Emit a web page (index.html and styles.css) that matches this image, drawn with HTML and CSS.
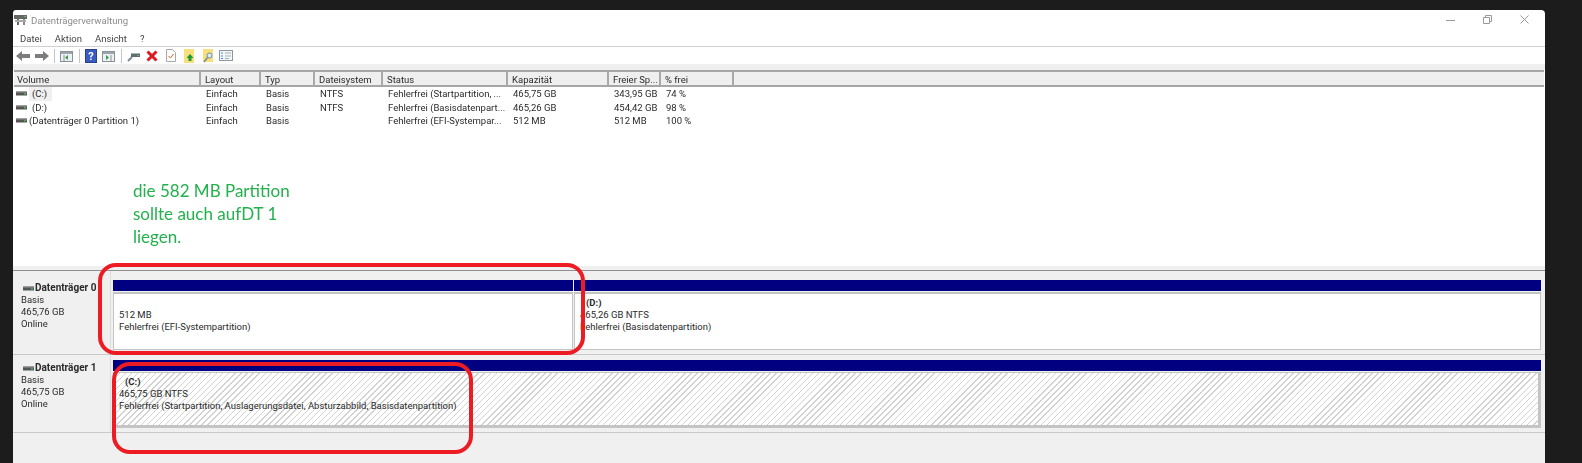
FILE: index.html
```html
<!DOCTYPE html>
<html lang="de">
<head>
    <meta charset="UTF-8">
    <title>Datenträgerverwaltung</title>
    <link rel="stylesheet" href="styles.css">
</head>
<body>
    <svg width="0" height="0" class="defs">
        <symbol id="disk" viewBox="0 0 11 5">
            <rect x="0" y="0.5" width="11" height="4" fill="#555"/>
            <rect x="0" y="0.5" width="11" height="1" fill="#999"/>
            <rect x="8" y="2" width="2" height="1.5" fill="#4caf50"/>
        </symbol>
    </svg>
    <div class="window">
        <div class="titlebar">
            <svg class="app-icon" width="14" height="12" viewBox="0 0 14 12">
                <rect x="0" y="1" width="13" height="4" fill="#666"/>
                <rect x="3" y="5" width="2" height="6" fill="#666"/>
                <rect x="9" y="5" width="2" height="6" fill="#888"/>
                <rect x="1" y="6" width="11" height="2" fill="#aaa"/>
                <rect x="10" y="2" width="2" height="1" fill="#6b6"/>
            </svg>
            <span class="title">Datenträgerverwaltung</span>
            <div class="win-buttons">
                <svg width="10" height="10" viewBox="0 0 10 10"><path d="M0 5.5h9" stroke="#999" fill="none"/></svg>
                <svg width="10" height="10" viewBox="0 0 10 10"><path d="M.5 2.5h6v6h-6zM2.5 2.5v-2h6v6h-2" stroke="#999" fill="none"/></svg>
                <svg width="10" height="10" viewBox="0 0 10 10"><path d="M.5 .5l8 8M8.5 .5l-8 8" stroke="#999" fill="none"/></svg>
            </div>
        </div>
        <div class="menubar">
            <span>Datei</span>
            <span>Aktion</span>
            <span>Ansicht</span>
            <span>?</span>
        </div>
        <div class="toolbar">
            <svg class="tb" width="14" height="12" viewBox="0 0 14 12"><path d="M0 6l6-5v3h8v4H6v3z" fill="#7d7d7d"/></svg>
            <svg class="tb" width="14" height="12" viewBox="0 0 14 12"><path d="M14 6L8 1v3H0v4h8v3z" fill="#7d7d7d"/></svg>
            <i class="tb-sep"></i>
            <svg class="tb" width="14" height="12" viewBox="0 0 14 12"><rect x=".5" y="1.5" width="12" height="10" fill="#eef1f3" stroke="#8a9298"/><rect x="1" y="2" width="11" height="2" fill="#9aa5ad"/><path d="M8 5v5L5 7.5z" fill="#3c9a4a"/><path d="M4 5v6" stroke="#8a9298"/></svg>
            <i class="tb-sep"></i>
            <svg class="tb" width="12" height="14" viewBox="0 0 12 14"><rect x=".5" y=".5" width="11" height="13" fill="#3a5cc0" stroke="#27408f"/><text x="6" y="11" class="help-mark">?</text></svg>
            <svg class="tb" width="14" height="12" viewBox="0 0 14 12"><rect x=".5" y="1.5" width="12" height="10" fill="#eef1f3" stroke="#8a9298"/><rect x="1" y="2" width="11" height="2" fill="#9aa5ad"/><path d="M4 5v5l3-2.500z" fill="#3c9a4a"/><path d="M9 5v6" stroke="#8a9298"/></svg>
            <i class="tb-sep"></i>
            <svg class="tb" width="14" height="12" viewBox="0 0 14 12"><path d="M1 11l4-4" stroke="#7a8a94" stroke-width="2"/><rect x="4" y="3" width="9" height="4" fill="#5f6b73"/><rect x="4" y="3" width="9" height="1" fill="#a5b3bb"/><rect x="10" y="5" width="2" height="1" fill="#5b5"/></svg>
            <svg class="tb" width="12" height="12" viewBox="0 0 12 12"><path d="M1.500 1.500l9 9M10.500 1.500l-9 9" stroke="#dd1a1f" stroke-width="3"/></svg>
            <svg class="tb tb-far" width="10" height="13" viewBox="0 0 10 13"><path d="M.5 .5h6l3 3v9h-9z" fill="#fdfdfd" stroke="#a8a8a8"/><path d="M2.500 7l2 2 3-4" stroke="#d8692f" fill="none"/></svg>
            <svg class="tb tb-far" width="11" height="14" viewBox="0 0 11 14"><rect width="10" height="14" fill="#f7df7c"/><path d="M6 5l3.500 4H7.500v3h-3V9H2.500z" fill="#1f9a33"/></svg>
            <svg class="tb tb-far" width="11" height="14" viewBox="0 0 11 14"><rect width="10" height="13" fill="#f7df7c"/><circle cx="6.500" cy="6.500" r="2.500" fill="#dfeaf2" stroke="#6f8ca3"/><path d="M4.500 8.500L1 13" stroke="#6f8ca3" stroke-width="1.500"/></svg>
            <svg class="tb" width="14" height="11" viewBox="0 0 14 11"><rect x=".5" y=".5" width="13" height="10" fill="#f3f6f8" stroke="#8e989f"/><path d="M2 3h2M2 6h2M2 8.500h2" stroke="#4b8fc4"/><path d="M6 3h6M6 6h6M6 8.500h4" stroke="#a8b0b5"/></svg>
        </div>

        <div class="vol-band"></div>
        <div class="vol-grid vol-head">
            <span>Volume</span>
            <span>Layout</span>
            <span>Typ</span>
            <span>Dateisystem</span>
            <span>Status</span>
            <span>Kapazität</span>
            <span>Freier Sp...</span>
            <span>% frei</span>
            <span></span>
        </div>
        <div class="vol-list">
            <div class="vol-grid vol-row">
                <span class="vol-name"><svg class="disk-icon"><use href="#disk"/></svg><em class="sel">(C:)</em></span>
                <span>Einfach</span><span>Basis</span><span>NTFS</span>
                <span>Fehlerfrei (Startpartition, ...</span>
                <span>465,75 GB</span><span>343,95 GB</span><span>74 %</span><span></span>
            </div>
            <div class="vol-grid vol-row">
                <span class="vol-name"><svg class="disk-icon"><use href="#disk"/></svg><em>(D:)</em></span>
                <span>Einfach</span><span>Basis</span><span>NTFS</span>
                <span>Fehlerfrei (Basisdatenpart...</span>
                <span>465,26 GB</span><span>454,42 GB</span><span>98 %</span><span></span>
            </div>
            <div class="vol-grid vol-row">
                <span class="vol-name"><svg class="disk-icon"><use href="#disk"/></svg><b class="vol-plain">(Datenträger 0 Partition 1)</b></span>
                <span>Einfach</span><span>Basis</span><span></span>
                <span>Fehlerfrei (EFI-Systempar...</span>
                <span>512 MB</span><span>512 MB</span><span>100 %</span><span></span>
            </div>
        </div>
        <div class="splitter"></div>

        <div class="disks">
            <div class="disk disk-0">
                <div class="disk-info">
                    <div class="disk-name"><svg class="disk-icon"><use href="#disk"/></svg>Datenträger 0</div>
                    <div>Basis</div>
                    <div>465,76 GB</div>
                    <div>Online</div>
                </div>
                <div class="parts">
                    <div class="part part-efi">
                        <div class="part-bar"></div>
                        <div class="part-body">
                            <div>&nbsp;</div>
                            <div>512 MB</div>
                            <div>Fehlerfrei (EFI-Systempartition)</div>
                        </div>
                    </div>
                    <div class="part part-d">
                        <div class="part-bar"></div>
                        <div class="part-body">
                            <div class="part-label">(D:)</div>
                            <div>465,26 GB NTFS</div>
                            <div>Fehlerfrei (Basisdatenpartition)</div>
                        </div>
                    </div>
                </div>
            </div>
            <div class="disk disk-1">
                <div class="disk-info">
                    <div class="disk-name"><svg class="disk-icon"><use href="#disk"/></svg>Datenträger 1</div>
                    <div>Basis</div>
                    <div>465,75 GB</div>
                    <div>Online</div>
                </div>
                <div class="parts">
                    <div class="part part-c">
                        <div class="part-bar"></div>
                        <div class="part-body hatch">
                            <div class="part-label">(C:)</div>
                            <div>465,75 GB NTFS</div>
                            <div>Fehlerfrei (Startpartition, Auslagerungsdatei, Absturzabbild, Basisdatenpartition)</div>
                        </div>
                    </div>
                </div>
            </div>
        </div>
    </div>

    <p class="note">die 582 MB Partition<br>sollte auch aufDT 1<br>liegen.</p>
    <div class="mark mark-top"></div>
    <div class="mark mark-bottom"></div>
</body>
</html>
```

FILE: styles.css
```css
html, body {
    height: 100%;
}
body {
    margin: 0;
    background-color: #1c1c1c;
    overflow: hidden;
    font-family: 'Roboto', 'Noto Sans', sans-serif;
    font-size: 9.500px;
    color: #2a2a2a;
    position: relative;
}
.defs {
    position: absolute;
}
.window {
    margin: 10px 0 0 13px;
    width: 1532px;
    height: 453px;
    background-color: #fff;
    border-radius: 3px 4px 0 0;
    overflow: hidden;
    display: flex;
    flex-direction: column;
    filter: blur(0.4px);
}

/* title, menu, toolbar */
.titlebar {
    height: 20px;
    display: flex;
    align-items: center;
    padding-left: 1px;
    flex: none;
}
.app-icon {
    margin-right: 3px;
}
.title {
    color: #8c8c8c;
    font-size: 9.600px;
}
.win-buttons {
    margin-left: auto;
    display: flex;
    gap: 27px;
    padding-right: 15px;
}
.menubar {
    height: 16px;
    display: flex;
    align-items: center;
    gap: 13px;
    padding-left: 7px;
    border-bottom: 1px solid #d0d0d0;
    color: #444;
    flex: none;
}
.toolbar {
    height: 17px;
    display: flex;
    align-items: center;
    padding-left: 3px;
    gap: 5px;
    flex: none;
}
.tb {
    flex: none;
    display: block;
}
.tb-far {
    margin-left: 3px;
}
.tb-sep {
    width: 1px;
    height: 14px;
    background-color: #c4c4c4;
}
.help-mark {
    font-size: 11px;
    font-weight: bold;
    fill: #fff;
    text-anchor: middle;
}

/* volume list */
.vol-band {
    height: 6px;
    background-color: #efefef;
    flex: none;
}
.vol-grid {
    display: grid;
    grid-template-columns: 187px 60px 54px 68px 125px 101px 52px 73px 1fr;
}
.vol-head {
    height: 13px;
    margin-left: 1px;
    margin-right: 1px;
    background-color: #efefef;
    border-top: 2px solid #a6a6a6;
    border-bottom: 2px solid #a6a6a6;
    flex: none;
}
.vol-head span {
    border-right: 2px solid #a9a9a9;
    padding-left: 4px;
    line-height: 15px;
    white-space: nowrap;
    overflow: hidden;
}
.vol-head span:first-child {
    padding-left: 3px;
}
.vol-head span:last-child {
    border-right: none;
}
.vol-list {
    flex: 1;
    margin-left: 1px;
}
.vol-row {
    height: 13.600px;
    line-height: 13.600px;
    white-space: nowrap;
}
.vol-row span {
    padding-left: 5px;
    overflow: hidden;
}
.vol-row .vol-name {
    padding-left: 2px;
    display: flex;
    align-items: center;
}
.disk-icon {
    width: 11px;
    height: 5px;
    flex: none;
    margin-right: 1px;
}
.vol-name em {
    font-style: normal;
    margin-left: 1px;
    padding: 0 5px 0 3px;
}
.vol-name .sel {
    background-color: #f0f0f0;
}
.vol-plain {
    font-weight: normal;
    margin-left: 1px;
}
.splitter {
    height: 4px;
    background-color: #f0f0f0;
    border-bottom: 1px solid #8f8f8f;
    flex: none;
}

/* disk rows */
.disks {
    height: 192px;
    background-color: #f0f0f0;
    flex: none;
}
.disk {
    display: flex;
    border-bottom: 1px solid #c9c9c9;
}
.disk-0 {
    height: 83px;
}
.disk-1 {
    height: 77px;
}
.disk-info {
    width: 98px;
    padding: 11px 0 0 8px;
    box-sizing: border-box;
    border-right: 1px solid #dcdcdc;
    line-height: 12px;
    flex: none;
    white-space: nowrap;
    overflow: hidden;
}
.disk-1 .disk-info {
    padding-top: 7px;
}
.disk-name {
    font-weight: bold;
    font-size: 10px;
    display: flex;
    align-items: center;
    padding-left: 2px;
}
.parts {
    flex: 1;
    display: flex;
    padding: 9px 4px 0 2px;
    gap: 1px;
}
.disk-1 .parts {
    padding-top: 5px;
}
.part {
    display: flex;
    flex-direction: column;
}
.part-efi {
    width: 460px;
}
.part-d {
    flex: 1;
}
.part-c {
    flex: 1;
}
.part-bar {
    height: 11px;
    background-color: #000080;
    flex: none;
}
.part-body {
    height: 58px;
    box-sizing: border-box;
    margin-top: 1px;
    background-color: #fff;
    border: 1px solid #c4c4c4;
    border-top-width: 2px;
    padding: 3px 0 0 5px;
    line-height: 12px;
    white-space: nowrap;
}
.part-label {
    font-weight: bold;
    padding-left: 6px;
}
.hatch {
    border: 2px solid #c4c4c4;
    border-width: 1px 3px 3px 0;
    height: 56px;
    padding-left: 6px;
    background-color: #fff;
    background-image: repeating-linear-gradient(135deg, #d2d2d2 0, #d2d2d2 1px, #fff 1px, #fff 4.300px);
}

/* annotations drawn over the screenshot */
.note {
    position: absolute;
    left: 133px;
    top: 179px;
    margin: 0;
    font-family: 'Lato', sans-serif;
    font-size: 17px;
    line-height: 23px;
    color: #22b14c;
}
.mark {
    position: absolute;
    box-sizing: border-box;
    border: 4px solid #ed1c24;
    border-radius: 18px;
}
.mark-top {
    left: 98px;
    top: 263px;
    width: 487px;
    height: 92px;
}
.mark-bottom {
    left: 112px;
    top: 362px;
    width: 361px;
    height: 92px;
}
```
